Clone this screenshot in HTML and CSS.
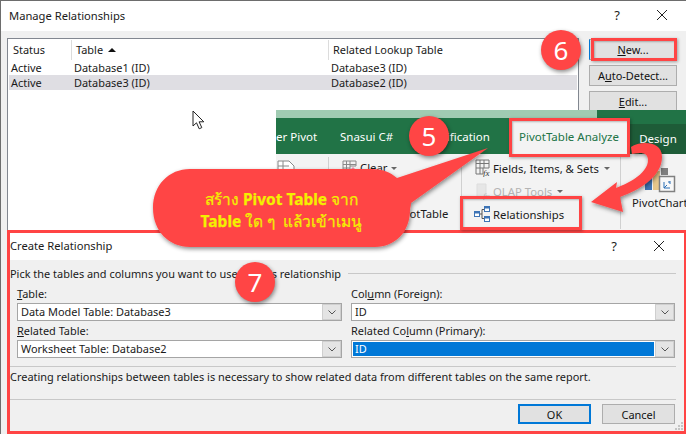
FILE: index.html
```html
<!DOCTYPE html>
<html lang="en">
<head>
<meta charset="utf-8">
<title>Manage Relationships</title>
<link rel="stylesheet" href="styles.css">
</head>
<body>
<div class="canvas">
  <section class="manage">
    <header class="titlebar manage-title">
      <span class="title">Manage Relationships</span>
      <span class="winbtns">
        <span class="help">?</span>
        <svg class="close" viewBox="0 0 12 12"><path d="M1 1l10 10M11 1L1 11"/></svg>
      </span>
    </header>
    <div class="manage-body">
      <div class="listbox">
        <div class="row head">
          <span class="c1">Status</span>
          <span class="c2">Table <svg class="sort" viewBox="0 0 8 4"><path d="M4 0l4 4H0z"/></svg></span>
          <span class="c3">Related Lookup Table</span>
        </div>
        <div class="row"><span class="c1">Active</span><span class="c2">Database1 (ID)</span><span class="c3">Database3 (ID)</span></div>
        <div class="row sel"><span class="c1">Active</span><span class="c2">Database3 (ID)</span><span class="c3">Database2 (ID)</span></div>
      </div>
      <div class="side">
        <button class="btn new"><u>N</u>ew...</button>
        <button class="btn">A<u>u</u>to-Detect...</button>
        <button class="btn"><u>E</u>dit...</button>
      </div>
    </div>
  </section>

  <svg class="cursor" viewBox="0 0 13 20"><path d="M1 1v15l3.500-3.200 2.700 6 2.600-1.200-2.700-5.800h4.700z"/></svg>

  <section class="ribbon">
    <div class="strip"><span class="strip-l"></span><span class="strip-r"></span></div>
    <div class="tabs">
      <span class="tab t1">er Pivot</span>
      <span class="tab t2">Snasui C#</span>
      <span class="tab t3">Notification</span>
      <span class="tab active">PivotTable Analyze</span>
      <span class="tab design">Design</span>
    </div>
    <div class="rbody">
      <div class="group g1">
        <svg class="ico-sheet" viewBox="0 0 18 14"><path d="M1 1h11l5 5v7H1z"/><path d="M1 6h11M6 1v12"/></svg>
        <span class="ot">PivotTable</span>
      </div>
      <div class="group g2">
        <svg class="ico-clear" viewBox="0 0 15 14"><path class="clr-grid" d="M1 1h13v5H8v6H1zM1 4.500h13M1 8h7M4.500 1v11M8 1v5"/><path class="clr-rub" d="M8 10l3-3 3 3-3 3z"/></svg>
        <span class="clear">Clear <i class="caret"></i></span>
      </div>
      <div class="group g3">
        <span class="ritem"><svg class="ico" viewBox="0 0 16 18"><path d="M1 1h13v8H8v6H1zM1 4.500h13M1 9h7M5 1v14M9 1v8"/><text x="8" y="17">fx</text></svg>Fields, Items, &amp; Sets <i class="caret"></i></span>
        <span class="ritem dim"><svg class="ico" viewBox="0 0 16 18"><path class="can" d="M2 2h9v14H2z"/><text x="8" y="17">fx</text></svg>OLAP Tools <i class="caret"></i></span>
        <span class="ritem rel"><svg class="ico" viewBox="0 0 16 18"><path class="ln" d="M6 9h2M8 4.500v9M8 4.500h3M8 13.500h3"/><rect class="wh" x=".5" y="6.500" width="5" height="5"/><rect class="bl" x=".5" y="6.500" width="5" height="2"/><rect class="wh" x="10.500" y="1.500" width="5" height="5"/><rect class="bl" x="10.500" y="1.500" width="5" height="2"/><rect class="wh" x="10.500" y="11.500" width="5" height="5"/><rect class="bl" x="10.500" y="11.500" width="5" height="2"/></svg>Relationships</span>
      </div>
      <div class="group g4">
        <svg class="chart" viewBox="0 0 31 26"><rect x="0" y="9" width="7" height="13" fill="#3f74b5"/><rect x="8" y="3" width="7" height="19" fill="#e6c68a"/><rect x="16" y="0" width="7" height="7" fill="#7f7f7f"/><rect x="14.500" y="8.500" width="15" height="15" fill="#f8f8f8" stroke="#808080" stroke-width="1.500"/><path d="M19 14v6h6M23 14l2 0M25 13v3M19 20l3-3" stroke="#2a6fb5" fill="none"/></svg>
        <span class="chart-lb">PivotChart</span>
      </div>
    </div>
  </section>

  <section class="create">
    <header class="titlebar create-title">
      <span class="title">Create Relationship</span>
      <span class="winbtns">
        <span class="help">?</span>
        <svg class="close" viewBox="0 0 12 12"><path d="M1 1l10 10M11 1L1 11"/></svg>
      </span>
    </header>
    <div class="create-body">
      <div class="pick"><span>Pick the tables and columns you want to use for this relationship</span><hr class="rule"></div>
      <div class="fields">
        <div class="col">
          <label class="lb"><u>T</u>able:</label>
          <div class="combo"><span class="val">Data Model Table: Database3</span><span class="drop"><svg viewBox="0 0 8 5"><path d="M.5.5L4 4 7.500.5"/></svg></span></div>
          <label class="lb"><u>R</u>elated Table:</label>
          <div class="combo"><span class="val">Worksheet Table: Database2</span><span class="drop"><svg viewBox="0 0 8 5"><path d="M.5.5L4 4 7.500.5"/></svg></span></div>
        </div>
        <div class="col col-r">
          <label class="lb">Col<u>u</u>mn (Foreign):</label>
          <div class="combo"><span class="val">ID</span><span class="drop"><svg viewBox="0 0 8 5"><path d="M.5.5L4 4 7.500.5"/></svg></span></div>
          <label class="lb">Related Co<u>l</u>umn (Primary):</label>
          <div class="combo"><span class="val picked">ID</span><span class="drop"><svg viewBox="0 0 8 5"><path d="M.5.5L4 4 7.500.5"/></svg></span></div>
        </div>
      </div>
      <hr class="rule">
      <p class="note">Creating relationships between tables is necessary to show related data from different tables on the same report.</p>
      <hr class="rule">
      <div class="actions">
        <button class="btn ok">OK</button>
        <button class="btn cancel">Cancel</button>
      </div>
    </div>
    <svg class="grip" viewBox="0 0 10 10"><path d="M7 1h2v2H7zM4 4h2v2H4zM7 4h2v2H7zM1 7h2v2H1zM4 7h2v2H4zM7 7h2v2H7z"/></svg>
  </section>

  <div class="mark mark-new"></div>
  <div class="mark mark-tab"></div>
  <div class="mark mark-rel"></div>

  <svg class="overlay" viewBox="0 0 686 434">
    <defs><filter id="sh" x="-20%" y="-20%" width="140%" height="140%"><feDropShadow dx="1" dy="2" stdDeviation="2" flood-color="#000" flood-opacity=".45"/></filter></defs>
    <path class="red" filter="url(#sh)" d="M190 169H372C382 169 390 172 397 178L488 148L411 203C411 206 410 208 410 210C410 232 395 247 375 247H190C169 247 153 231 153 208C153 185 169 169 190 169Z"/>
    <path class="red" filter="url(#sh)" d="M631 147C640 141 662 140 662 157C662 176 640 190 620 197L623 212L591 202L617 182L616 188C632 182 648 172 648 160C648 152 640 152 632 154Z"/>
  </svg>

  <div class="callout"><span>สร้าง <b>Pivot Table</b> จาก</span><span><b>Table</b> ใด ๆ&nbsp; แล้วเข้าเมนู</span></div>
  <div class="badge b5">5</div>
  <div class="badge b6">6</div>
  <div class="badge b7">7</div>
</div>
</body>
</html>
```
FILE: styles.css
```css
* { box-sizing: border-box; }
html, body { margin: 0; padding: 0; background: #fff; }
body { font-family: "Noto Sans", "Open Sans", sans-serif; font-size: 10.95px; color: #1a1a1a; overflow: hidden; }
.canvas { position: relative; width: 686px; height: 434px; overflow: hidden; }
u { text-decoration-thickness: 1px; text-underline-offset: 1px; }

.titlebar { display: flex; align-items: center; justify-content: space-between; background: #fff; }
.title { font-size: 11.2px; }
.winbtns { display: flex; align-items: center; gap: 36px; }
.help { font-size: 13px; }
.close { width: 12px; height: 12px; fill: none; stroke: #222; stroke-width: 1; }

.manage { position: absolute; inset: 0; border: 1px solid #6d6d6d; border-bottom: 0; border-right: 0; }
.manage-title { height: 30px; padding: 0 18px 2px 8px; }
.manage-body { display: flex; gap: 10px; background: #f0f0f0; height: 403px; padding: 7px 9px 0 6px; }
.listbox { width: 572px; height: 300px; background: #fff; border: 1px solid #828790; }
.row { display: flex; height: 15px; margin: 0 1px; padding-left: 2px; align-items: center; }
.row .c1 { width: 63px; }
.row .c2 { width: 257px; }
.row.sel { background: #dfdee3; }
.head { height: 21px; }
.head .c1 { width: 60px; padding-left: 2px; }
.head .c2 { border-left: 1px solid #dcdcdc; padding-left: 4px; }
.head .c3 { border-left: 1px solid #dcdcdc; padding-left: 4px; }
.head span { height: 20px; line-height: 20px; }
.sort { width: 8px; height: 4px; margin: 0 0 2px 2px; fill: #111; }

.side { display: flex; flex-direction: column; gap: 5px; width: 88px; padding-top: 1px; }
.btn { font: inherit; color: #111; background: #e1e1e1; border: 1px solid #adadad; height: 21px; padding: 0; }
.new { border-left: 1px solid #0078d7; }

.cursor { position: absolute; left: 192px; top: 110px; width: 13px; height: 20px; fill: #fff; stroke: #222; stroke-width: 1; }

.ribbon { position: absolute; left: 276px; top: 110px; width: 410px; height: 120px; background: #f3f3f3; }
.strip { display: flex; height: 8px; }
.strip-l { width: 321px; background: #a0cbb2; }
.strip-r { flex: 1; background: #217346; }
.tabs { position: relative; height: 36px; background: #217346; color: #fff; display: flex; align-items: center; font-size: 11.5px; }
.tab { position: absolute; }
.t1 { left: 0; }
.t2 { left: 64px; }
.t3 { left: 151px; }
.active { left: 234px; width: 118px; top: 0; height: 36px; background: #f3f3f3; color: #217346; line-height: 38px; text-align: center; }
.design { left: 354px; width: 56px; top: 6px; height: 30px; background: #1e5c38; line-height: 30px; text-align: center; }
.rbody { position: relative; height: 76px; font-size: 11.3px; }
.group { position: absolute; top: 3px; height: 72px; }
.g1 { left: 0; width: 53px; border-right: 1px solid #d0d0d0; }
.ico-sheet { width: 18px; height: 14px; margin: 3px 0 0 1px; fill: #fff; stroke: #888; display: block; }
.ot { position: absolute; left: 118px; top: 49px; white-space: nowrap; }
.g2 { left: 53px; width: 133px; border-right: 1px solid #d0d0d0; padding: 2px 0 0 13px; display: flex; gap: 3px; align-items: flex-start; }
.ico-clear { width: 15px; height: 14px; flex: none; margin-top: 1px; fill: none; }
.clr-grid { stroke: #888; }
.clr-rub { fill: #e88aa6; }
.clear { line-height: 18px; }
.caret { display: inline-block; border: 3px solid transparent; border-top: 3px solid #666; border-bottom: 0; vertical-align: middle; margin-left: 1px; }
.g3 { left: 186px; width: 159px; border-right: 1px solid #d0d0d0; padding: 2px 0 0 13px; display: flex; flex-direction: column; gap: 5px; }
.ritem { display: flex; align-items: center; gap: 2px; height: 18px; white-space: nowrap; }
.ritem .caret { margin-left: 3px; }
.ico { width: 16px; height: 18px; flex: none; fill: none; stroke: #777; }
.rel .ico { margin-left: -1px; margin-right: 1px; }
.ico text { font: italic 9px "Liberation Serif", serif; fill: #333; stroke: none; }
.dim { color: #b4b4b4; }
.dim .ico { stroke: #ddd; }
.dim .ico text { fill: #bbb; }
.can { fill: #e6e6e6; }
.ln { stroke: #555; }
.bl { fill: #3f74b5; stroke: none; }
.wh { fill: #fff; stroke: #3f74b5; }
.g4 { left: 345px; width: 65px; }
.chart { position: absolute; left: 24px; top: 11px; width: 31px; height: 26px; }
.chart-lb { position: absolute; left: 11px; top: 38px; white-space: nowrap; }

.create { position: absolute; left: 7px; top: 230px; width: 679px; height: 204px; border: 3px solid #ff4444; border-right-width: 2px; background: #f0f0f0; }
.create-title { height: 27px; padding: 0 19px 2px 0; }
.create-body { padding: 6px 0 0 0; }
.pick { position: relative; height: 20px; }
.pick span { display: block; line-height: 16px; }
.rule { border: 0; height: 1px; background: #c8c8c8; margin: 0 8px 0 0; }
.pick .rule { position: absolute; left: 338px; right: 8px; top: 7px; margin: 0; }
.fields { display: flex; padding-left: 7px; gap: 9px; height: 72px; margin-bottom: 8px; }
.col { width: 325px; }
.col-r { width: 324px; }
.lb { display: block; height: 17px; line-height: 16px; }
.combo { display: flex; height: 18px; background: #fff; border: 1px solid #a5a5a5; margin-bottom: 2px; padding: 1px; }
.val { flex: 1; padding-left: 2px; line-height: 14px; }
.picked { background: #0078d7; color: #fff; outline: 1px solid #fff; }
.drop { width: 19px; background: #e4e4e4; border: 1px solid #cfcfcf; margin: -1px -1px -1px 1px; display: flex; align-items: center; justify-content: center; }
.drop svg { width: 8px; height: 5px; fill: none; stroke: #555; }
.note { margin: 0; height: 32px; line-height: 20px; }
.actions { display: flex; justify-content: flex-end; gap: 11px; padding: 4px 9px 0 0; }
.ok { width: 73px; height: 20px; border: 2px solid #0078d7; }
.cancel { width: 73px; height: 20px; }
.grip { position: absolute; right: 0; bottom: 0; width: 10px; height: 10px; fill: #c4c4c4; }

.mark { position: absolute; border: 3px solid #ff4444; box-shadow: 1px 1px 3px rgba(0,0,0,.35), inset 1px 1px 2px rgba(0,0,0,.25); }
.mark-new { left: 591px; top: 38px; width: 86px; height: 23px; }
.mark-tab { left: 509px; top: 118px; width: 121px; height: 39px; }
.mark-rel { left: 460px; top: 196px; width: 122px; height: 34px; }

.overlay { position: absolute; inset: 0; width: 686px; height: 434px; pointer-events: none; }
.red { fill: #ff4545; }
.callout { position: absolute; left: 153px; top: 188px; width: 257px; display: flex; flex-direction: column; align-items: center; color: #f4f000; font-size: 15.5px; line-height: 22px; }
.callout span { -webkit-text-stroke: .25px #f4f000; }
.callout b { font-weight: 700; }

.badge { position: absolute; width: 40px; height: 40px; border-radius: 50%; background: #ff4545; color: #fff; font-size: 26px; line-height: 40px; text-align: center; box-shadow: 1px 2px 4px rgba(0,0,0,.45); }
.b5 { left: 409px; top: 116px; }
.b6 { left: 541px; top: 30px; }
.b7 { left: 235px; top: 262px; }
```
